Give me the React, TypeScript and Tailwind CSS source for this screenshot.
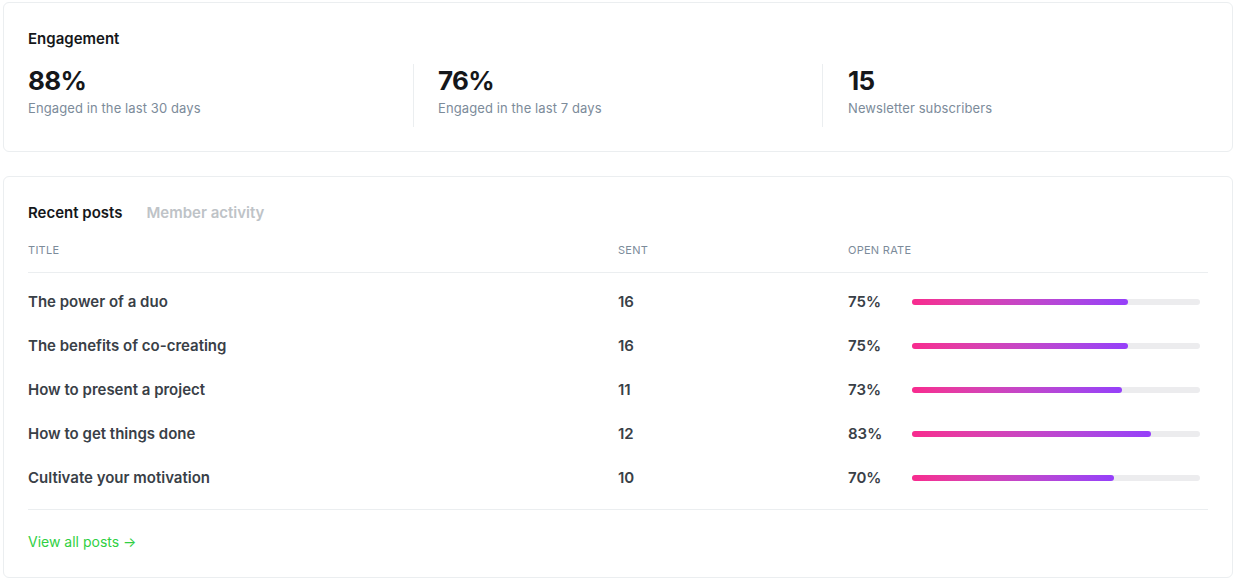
import React from 'react';

interface Post {
    title: string;
    sent: number;
    openRate: number;
}

const posts: Post[] = [
    { title: 'The power of a duo', sent: 16, openRate: 75 },
    { title: 'The benefits of co-creating', sent: 16, openRate: 75 },
    { title: 'How to present a project', sent: 11, openRate: 73 },
    { title: 'How to get things done', sent: 12, openRate: 83 },
    { title: 'Cultivate your motivation', sent: 10, openRate: 70 },
];

const stats = [
    { value: '88%', label: 'Engaged in the last 30 days' },
    { value: '76%', label: 'Engaged in the last 7 days' },
    { value: '15', label: 'Newsletter subscribers' },
];

export default function App() {
    return (
        <div className="min-h-screen bg-white pt-[2px] pl-[3px] pr-[3px] font-['Inter',sans-serif] antialiased">
            {/* Engagement */}
            <section className="rounded-md border border-[#ebeef0] px-6 pt-[26px] pb-[24px]">
                <h2 className="text-[15px] leading-5 font-semibold text-[#15171a]">Engagement</h2>
                <div className="mt-[15px] grid grid-cols-[385px_409px_1fr]">
                    {stats.map((s, i) => (
                        <div
                            key={s.label}
                            className={`flex h-[63px] flex-col pt-[1px] ${i === 0 ? '' : i === 1 ? 'border-l border-[#ebeef0] pl-[24px]' : 'border-l border-[#ebeef0] pl-[25px]'}`}
                        >
                            <span className="text-[26px] leading-8 font-bold tracking-tight text-[#15171a]">{s.value}</span>
                            <span className="mt-[2px] text-[13px] leading-[18px] tracking-[0.1px] text-[#7c8b9a]">{s.label}</span>
                        </div>
                    ))}
                </div>
            </section>

            {/* Posts */}
            <section className="mt-6 rounded-md border border-[#ebeef0] px-6 pt-[26px] pb-[24px]">
                <div className="flex gap-6 text-[15px] leading-5 font-semibold">
                    <span className="text-[#15171a]">Recent posts</span>
                    <span className="text-[#bec3c7]">Member activity</span>
                </div>

                <div className="mt-[19px] grid grid-cols-[590px_230px_1fr] border-b border-[#ebeef0] pb-[14px] text-[11px] leading-4 tracking-wide text-[#7c8b9a] uppercase">
                    <span>Title</span>
                    <span>Sent</span>
                    <span>Open rate</span>
                </div>

                <div className="border-b border-[#ebeef0] pt-[7px] pb-[9px]">
                    {posts.map((p) => (
                        <div
                            key={p.title}
                            className="grid h-11 grid-cols-[590px_230px_1fr] items-center text-[15px] font-semibold text-[#394047]"
                        >
                            <span>{p.title}</span>
                            <span>{p.sent}</span>
                            <div className="flex items-center pr-2">
                                <span className="w-16">{p.openRate}%</span>
                                <div className="h-[6px] flex-1 rounded-full bg-[#ececee]">
                                    <div
                                        className="h-full rounded-full bg-gradient-to-r from-[#f82a8e] to-[#953ffa]"
                                        style={{ width: `${p.openRate}%` }}
                                    />
                                </div>
                            </div>
                        </div>
                    ))}
                </div>

                <a href="#" className="mt-[22px] inline-block text-[14px] leading-5 text-[#30cf43]">
                    View all posts →
                </a>
            </section>
        </div>
    );
}
